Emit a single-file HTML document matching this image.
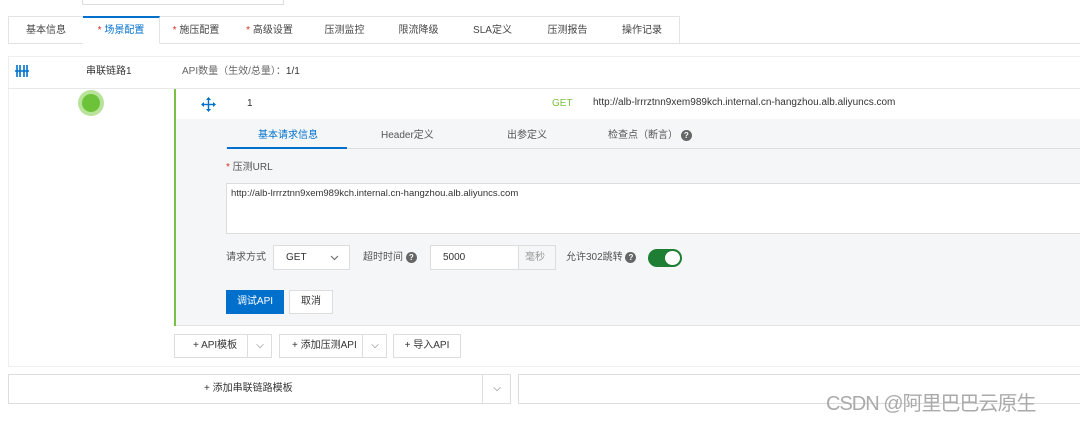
<!DOCTYPE html>
<html><head><meta charset="utf-8"><style>
*{box-sizing:border-box;margin:0;padding:0}
body{width:1080px;height:426px;background:#fff;font-family:"Liberation Sans","Noto Sans CJK SC",sans-serif;font-size:10px;line-height:12px;color:#333;position:relative;overflow:hidden}
.a{position:absolute}
.tab{position:absolute;top:16px;height:28px;border:1px solid #e3e3e3;border-left:none;line-height:27px;text-align:center;color:#444;background:#fff}
.r{color:#d93026}
.q{display:inline-block;width:11px;height:11px;border-radius:50%;background:#666;color:#fff;font-size:8px;line-height:11px;text-align:center;font-weight:bold;vertical-align:middle}
.btn{position:absolute;border:1px solid #ddd;background:#fff;text-align:center;color:#333}
</style></head><body>
<div class="a" style="left:82px;top:-1px;width:202px;height:6px;border:1px solid #ddd;border-top:none"></div>
<div class="a" style="left:8px;top:43px;width:1072px;height:1px;background:#e3e3e3"></div>
<div class="tab" style="left:8px;width:76px;border-left:1px solid #e3e3e3">基本信息</div>
<div class="tab" style="left:83px;width:77px;border-top:2px solid #0070cc;border-bottom-color:#fff;color:#0070cc;line-height:26px"><span class="r">* </span>场景配置</div>
<div class="tab" style="left:160px;width:73px"><span class="r">* </span>施压配置</div>
<div class="tab" style="left:232px;width:76px"><span class="r">* </span>高级设置</div>
<div class="tab" style="left:307px;width:76px">压测监控</div>
<div class="tab" style="left:382px;width:74px">限流降级</div>
<div class="tab" style="left:455px;width:76px">SLA定义</div>
<div class="tab" style="left:530px;width:76px">压测报告</div>
<div class="tab" style="left:605px;width:75px">操作记录</div>

<div class="a" style="left:8px;top:56px;width:1080px;height:311px;border:1px solid #eee;background:#fff"></div>
<div class="a" style="left:8px;top:88px;width:1072px;height:1px;background:#e8e8e8"></div>
<svg class="a" style="left:14px;top:64px" width="16" height="14" viewBox="0 0 16 14"><g stroke="#0070cc" stroke-width="1.6" fill="none"><path d="M3 1v12M6 1v12M10 1v12M13 1v12M1 7h14"/></g></svg>
<div class="a" style="left:86px;top:66px;color:#333">串联链路1</div>
<div class="a" style="left:182px;top:66px;color:#666">API数量（生效/总量）：<span style="color:#333">1/1</span></div>
<div class="a" style="left:78px;top:90px;width:26px;height:26px;border-radius:50%;background:#b9e39a"></div>
<div class="a" style="left:82px;top:94px;width:18px;height:18px;border-radius:50%;background:#6cc33a"></div>
<div class="a" style="left:174px;top:89px;width:2px;height:237px;background:#7ac143"></div>
<div class="a" style="left:176px;top:119px;width:904px;height:207px;background:#f5f6f7;border-bottom:1px solid #e3e3e3"></div>
<svg class="a" style="left:201px;top:97px" width="15" height="15" viewBox="0 0 15 15"><g fill="#0070cc"><path d="M7.5 0l2.5 3h-5zM7.5 15l2.5-3h-5zM0 7.5l3-2.5v5zM15 7.5l-3-2.5v5z"/><rect x="6.8" y="3" width="1.4" height="9"/><rect x="3" y="6.8" width="9" height="1.4"/></g></svg>
<div class="a" style="left:247px;top:98px">1</div>
<div class="a" style="left:552px;top:98px;color:#7ac143">GET</div>
<div class="a" style="left:593px;top:97px;font-size:10px">http://alb-lrrrztnn9xem989kch.internal.cn-hangzhou.alb.aliyuncs.com</div>

<div class="a" style="left:226px;top:148px;width:854px;height:1px;background:#ddd"></div>
<div class="a" style="left:227px;top:147px;width:120px;height:2px;background:#0070cc"></div>
<div class="a" style="left:258px;top:130px;color:#0070cc">基本请求信息</div>
<div class="a" style="left:381px;top:130px;color:#555">Header定义</div>
<div class="a" style="left:507px;top:130px;color:#555">出参定义</div>
<div class="a" style="left:608px;top:130px;color:#555">检查点（断言） <span class="q">?</span></div>
<div class="a" style="left:226px;top:162px;color:#555"><span class="r">* </span>压测URL</div>
<div class="a" style="left:226px;top:183px;width:860px;height:51px;background:#fff;border:1px solid #ddd;padding:4px 4px;font-size:9.5px">http://alb-lrrrztnn9xem989kch.internal.cn-hangzhou.alb.aliyuncs.com</div>
<div class="a" style="left:226px;top:252px;color:#555">请求方式</div>
<div class="a" style="left:273px;top:245px;width:77px;height:25px;background:#fff;border:1px solid #ddd;padding:6px 12px">GET<svg style="position:absolute;left:56px;top:9px" width="9" height="6" viewBox="0 0 9 6"><path d="M1 1l3.5 3.5L8 1" stroke="#666" fill="none"/></svg></div>
<div class="a" style="left:363px;top:252px;color:#555">超时时间 <span class="q">?</span></div>
<div class="a" style="left:430px;top:245px;width:126px;height:25px;background:#fff;border:1px solid #ddd;padding:6px 12px">5000</div>
<div class="a" style="left:518px;top:245px;width:38px;height:25px;background:#f5f6f7;border:1px solid #ddd;color:#999;padding:6px 6px">毫秒</div>
<div class="a" style="left:566px;top:252px;color:#555">允许302跳转 <span class="q">?</span></div>
<div class="a" style="left:648px;top:249px;width:34px;height:18px;border-radius:9px;background:#1e7e34"></div>
<div class="a" style="left:665px;top:251px;width:15px;height:14px;border-radius:50%;background:#fff"></div>
<div class="a" style="left:226px;top:290px;width:58px;height:24px;background:#0070cc;color:#fff;text-align:center;line-height:24px">调试API</div>
<div class="btn" style="left:289px;top:290px;width:44px;height:24px;line-height:22px">取消</div>

<div class="btn" style="left:174px;top:334px;width:98px;height:24px;line-height:22px;text-align:left;padding-left:18px">+ API模板<span style="position:absolute;left:72px;top:0;height:22px;border-left:1px solid #ddd;width:25px;text-align:center;color:#666">⌵</span></div>
<div class="btn" style="left:279px;top:334px;width:108px;height:24px;line-height:22px;text-align:left;padding-left:12px">+ 添加压测API<span style="position:absolute;left:82px;top:0;height:22px;border-left:1px solid #ddd;width:25px;text-align:center;color:#666">⌵</span></div>
<div class="btn" style="left:393px;top:334px;width:68px;height:24px;line-height:22px">+ 导入API</div>

<div class="btn" style="left:8px;top:374px;width:503px;height:30px;line-height:28px;text-align:left;padding-left:195px">+ 添加串联链路模板<span style="position:absolute;left:473px;top:0;height:28px;border-left:1px solid #ddd;width:29px;text-align:center;color:#666">⌵</span></div>
<div class="btn" style="left:518px;top:374px;width:570px;height:30px"></div>
<div class="a" style="left:826px;top:392px;font-size:20px;line-height:24px;color:#aaa;white-space:nowrap;letter-spacing:-1px">CSDN @阿里巴巴云原生</div>
</body></html>
